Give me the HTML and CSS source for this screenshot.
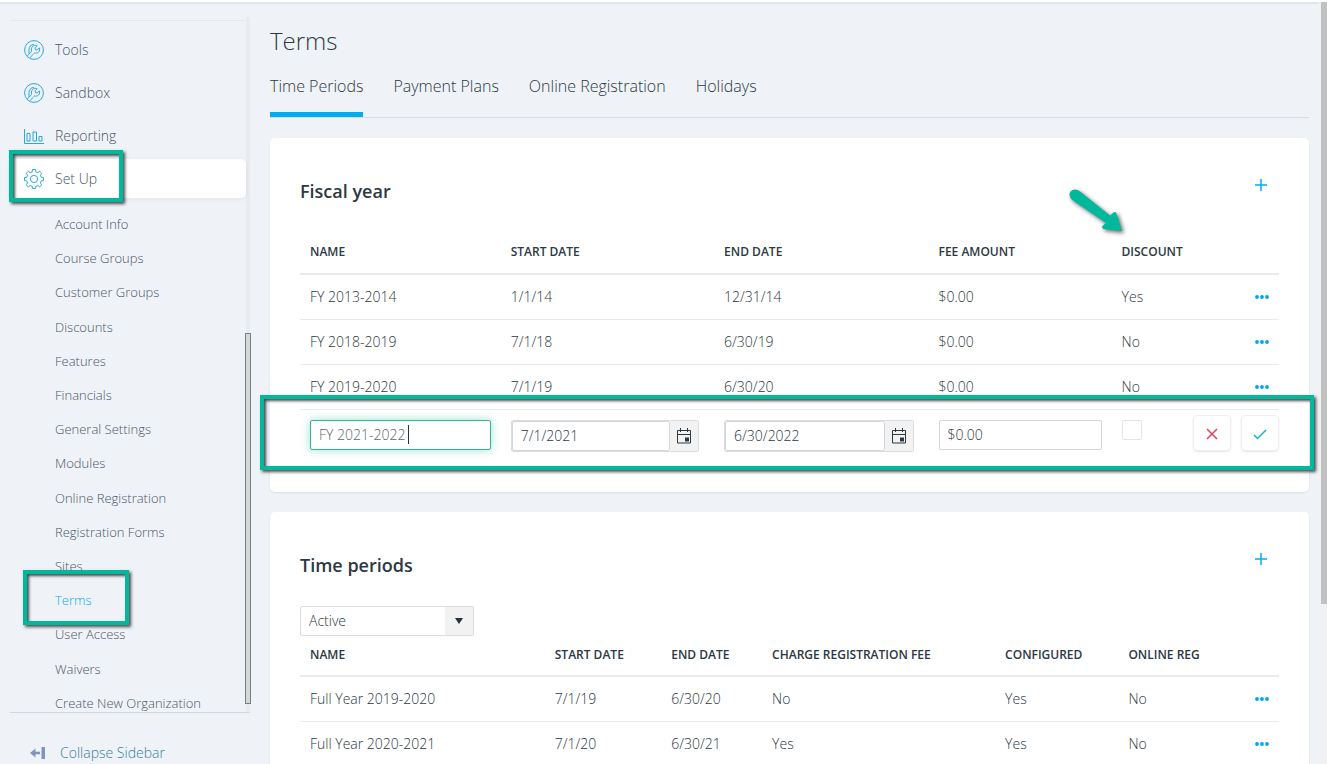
FILE: index.html
```html
<!DOCTYPE html>
<html lang="en">
<head>
    <meta charset="UTF-8">
    <meta name="viewport" content="width=device-width, initial-scale=1.0">
    <title>Terms</title>
    <link rel="stylesheet" href="styles.css">
</head>
<body>

    <!-- Shared icons -->
    <svg class="sprite" aria-hidden="true">
        <symbol id="icon-wrench" viewBox="0 0 20 20">
            <circle cx="10" cy="10" r="9.4"/>
            <path d="M3.400 16.400C3.800 15 5 13.800 6.500 12.700C7.500 12 7.700 11.500 7.500 10.300C7.200 8.300 8 6.600 9.500 5.800C10.800 5.200 12 5.200 13.200 5.700L11 7.900l.4 1.700 1.800.4 2.200-2.200c.6 1.500.2 3.200-.9 4.300-1.100 1-2.600 1.300-4 .9-1.200 1-2.800 2.600-4.300 4.600"/>
            <path d="M5 14.200V9.500C5 6.500 7 4.500 10 4.500"/>
        </symbol>
        <symbol id="icon-calendar" viewBox="0 0 16 16">
            <path d="M1.500 2.500h13v12.500h-13zM1.500 6.500h13M4.500 0v4M11.500 0v4"/>
            <path class="fill" d="M9 9.500h4v4H9z"/>
        </symbol>
        <symbol id="icon-dots" viewBox="0 0 14 4">
            <circle cx="2" cy="2" r="1.900"/>
            <circle cx="7" cy="2" r="1.900"/>
            <circle cx="12" cy="2" r="1.900"/>
        </symbol>
        <symbol id="icon-plus" viewBox="0 0 12 12">
            <path d="M6 0v12M0 6h12"/>
        </symbol>
    </svg>

    <div class="page">
        <aside class="sidebar">
            <div class="side-scroll">
                <nav class="side-nav">
                    <ul class="menu">
                        <li><a href="#"><svg class="menu-icon"><use href="#icon-wrench"/></svg>Tools</a></li>
                        <li><a href="#"><svg class="menu-icon"><use href="#icon-wrench"/></svg>Sandbox</a></li>
                        <li><a href="#"><svg class="menu-icon" viewBox="0 0 20 20"><path d="M.5 3v14.500H20M3 7.500h3v7.500h-3zM9 6h3.500v9h-3.500zM15 10.500h3v4.500h-3z"/></svg>Reporting</a></li>
                        <li class="current">
                            <a href="#"><svg class="menu-icon" viewBox="0 0 20 20"><circle cx="10" cy="10" r="3.600"/><path d="M8.200 2.800 8.500.5h3l.3 2.300 2 .9 1.900-1.400 2.100 2.100-1.400 1.900.9 2 2.200.3v3l-2.200.3-.9 2 1.400 1.900-2.100 2.100-1.900-1.400-2 .9-.3 2.100h-3l-.3-2.100-2-.9-1.900 1.400-2.100-2.100 1.400-1.900-.9-2-2.200-.3v-3l2.200-.3.9-2-1.400-1.900 2.100-2.100 1.900 1.400z"/></svg>Set Up</a>
                            <span class="mark mark-setup"></span>
                        </li>
                    </ul>
                    <ul class="submenu">
                        <li><a href="#">Account Info</a></li>
                        <li><a href="#">Course Groups</a></li>
                        <li><a href="#">Customer Groups</a></li>
                        <li><a href="#">Discounts</a></li>
                        <li><a href="#">Features</a></li>
                        <li><a href="#">Financials</a></li>
                        <li><a href="#">General Settings</a></li>
                        <li><a href="#">Modules</a></li>
                        <li><a href="#">Online Registration</a></li>
                        <li><a href="#">Registration Forms</a></li>
                        <li><a href="#">Sites</a></li>
                        <li><a href="#" class="selected">Terms</a><span class="mark mark-terms"></span></li>
                        <li><a href="#">User Access</a></li>
                        <li><a href="#">Waivers</a></li>
                        <li><a href="#">Create New Organization</a></li>
                    </ul>
                </nav>
                <div class="side-track"><div class="side-thumb"></div></div>
            </div>
            <button class="collapse" type="button">
                <svg viewBox="0 0 16 14"><path d="M0 7l5.500-4.500v3.200H10v2.600H5.500v3.200zM11.500 1H15v12h-3.500z"/></svg>
                Collapse Sidebar
            </button>
        </aside>

        <main class="content">
            <h1>Terms</h1>
            <nav class="tabs">
                <a href="#" class="active">Time Periods</a>
                <a href="#">Payment Plans</a>
                <a href="#">Online Registration</a>
                <a href="#">Holidays</a>
            </nav>

            <!-- Fiscal year -->
            <section class="card">
                <div class="card-head">
                    <h2>Fiscal year</h2>
                    <button class="add" type="button" aria-label="Add fiscal year"><svg><use href="#icon-plus"/></svg></button>
                </div>
                <table class="fiscal">
                    <thead>
                        <tr>
                            <th>Name</th>
                            <th>Start date</th>
                            <th>End date</th>
                            <th>Fee amount</th>
                            <th class="discount">Discount
                                <svg class="arrow" viewBox="0 0 60 52"><path d="M3.500 3.500C6 .8 10 .8 13 3.500L43 27.500 46.500 24.500C47.500 23.500 49 24 49.500 25.500L55 43 36.500 41C35 40.500 34.500 38.500 36 37.500L39 35 6 12.500C2.500 10 1.500 6 3.500 3.500z"/></svg>
                            </th>
                            <th></th>
                        </tr>
                    </thead>
                    <tbody>
                        <tr>
                            <td>FY 2013-2014</td><td>1/1/14</td><td>12/31/14</td><td>$0.00</td><td>Yes</td>
                            <td class="more"><button type="button" aria-label="More"><svg><use href="#icon-dots"/></svg></button></td>
                        </tr>
                        <tr>
                            <td>FY 2018-2019</td><td>7/1/18</td><td>6/30/19</td><td>$0.00</td><td>No</td>
                            <td class="more"><button type="button" aria-label="More"><svg><use href="#icon-dots"/></svg></button></td>
                        </tr>
                        <tr>
                            <td>FY 2019-2020</td><td>7/1/19</td><td>6/30/20</td><td>$0.00</td><td>No</td>
                            <td class="more"><button type="button" aria-label="More"><svg><use href="#icon-dots"/></svg></button></td>
                        </tr>
                        <tr class="edit">
                            <td><div class="name-field"><input type="text" aria-label="Name" value="FY 2021-2022"><span class="caret"></span></div></td>
                            <td><div class="date"><input type="text" aria-label="Start date" value="7/1/2021"><button type="button" aria-label="Pick start date"><svg><use href="#icon-calendar"/></svg></button></div></td>
                            <td><div class="date"><input type="text" aria-label="End date" value="6/30/2022"><button type="button" aria-label="Pick end date"><svg><use href="#icon-calendar"/></svg></button></div></td>
                            <td><input type="text" aria-label="Fee amount" value="$0.00"></td>
                            <td><input type="checkbox" aria-label="Discount"></td>
                            <td>
                                <div class="actions">
                                    <button class="cancel" type="button" aria-label="Cancel"><svg viewBox="0 0 14 14"><path d="M2 2l10 10M12 2 2 12"/></svg></button>
                                    <button class="save" type="button" aria-label="Save"><svg viewBox="0 0 14 14"><path d="M1 8l3.500 3.500L13 3"/></svg></button>
                                </div>
                            </td>
                        </tr>
                    </tbody>
                </table>
                <span class="mark mark-row"></span>
            </section>

            <!-- Time periods -->
            <section class="card">
                <div class="card-head">
                    <h2>Time periods</h2>
                    <button class="add" type="button" aria-label="Add time period"><svg><use href="#icon-plus"/></svg></button>
                </div>
                <div class="filter">
                    <select aria-label="Status">
                        <option>Active</option>
                        <option>Inactive</option>
                    </select>
                    <svg viewBox="0 0 8 6"><path d="M0 0h8L4 6z"/></svg>
                </div>
                <table class="periods">
                    <thead>
                        <tr>
                            <th>Name</th>
                            <th>Start date</th>
                            <th>End date</th>
                            <th>Charge registration fee</th>
                            <th>Configured</th>
                            <th>Online reg</th>
                            <th></th>
                        </tr>
                    </thead>
                    <tbody>
                        <tr>
                            <td>Full Year 2019-2020</td><td>7/1/19</td><td>6/30/20</td><td>No</td><td>Yes</td><td>No</td>
                            <td class="more"><button type="button" aria-label="More"><svg><use href="#icon-dots"/></svg></button></td>
                        </tr>
                        <tr>
                            <td>Full Year 2020-2021</td><td>7/1/20</td><td>6/30/21</td><td>Yes</td><td>Yes</td><td>No</td>
                            <td class="more"><button type="button" aria-label="More"><svg><use href="#icon-dots"/></svg></button></td>
                        </tr>
                    </tbody>
                </table>
            </section>
        </main>

        <div class="page-track"><div class="page-thumb"></div></div>
    </div>

</body>
</html>
```
FILE: styles.css
```css
* {
    box-sizing: border-box;
}
body {
    margin: 0;
    font-family: "Open Sans", "Noto Sans", sans-serif;
    font-weight: 350;
    font-size: 14px;
    line-height: 20px;
    color: #2c3842;
    background-color: #eff3f8;
}
a {
    color: inherit;
    text-decoration: none;
}
ul {
    list-style: none;
    margin: 0;
    padding: 0;
}
button, input, select {
    font: inherit;
    color: inherit;
}
button {
    padding: 0;
    border: none;
    background: none;
    cursor: pointer;
}
svg {
    display: block;
    fill: none;
    stroke: currentColor;
}
.sprite {
    display: none;
}
.page {
    display: flex;
    height: 100vh;
    overflow: hidden;
    border-top: 2px solid #fff;
    box-shadow: inset 0 2px 1px #e2e6ec;
}

/* Sidebar */
.sidebar {
    display: flex;
    flex-direction: column;
    flex: none;
    width: 250px;
    padding: 15px 0 0 10px;
    color: #4a5365;
}
.side-scroll {
    display: flex;
    flex: 1;
    border-bottom: 1px solid #d3d8de;
}
.side-nav {
    display: flex;
    flex-direction: column;
    flex: 1;
    margin-top: 3px;
    padding-top: 9px;
    border-top: 1px solid #e2e8ec;
}
.menu {
    display: flex;
    flex-direction: column;
    gap: 4px;
    margin-bottom: 18px;
}
.menu li, .submenu li {
    position: relative;
}
.menu a {
    display: flex;
    align-items: center;
    gap: 11px;
    height: 39px;
    padding-left: 14px;
    border-radius: 5px;
}
.menu-icon {
    width: 20px;
    height: 20px;
    color: #2ba6de;
}
.menu .current a {
    background-color: #fff;
    box-shadow: 0 1px 5px rgba(0, 0, 0, 0.06);
}
.submenu {
    display: flex;
    flex-direction: column;
    flex: 1;
    justify-content: space-between;
    padding-left: 45px;
    font-size: 13px;
    line-height: 17px;
}
.submenu a {
    display: block;
}
.submenu .selected {
    color: #00adf2;
}
.side-track {
    width: 4px;
    display: flex;
    justify-content: center;
    align-items: flex-end;
    padding-bottom: 8px;
    background-color: #e8ecf1;
}
.side-thumb {
    flex: none;
    width: 6px;
    height: 54%;
    background-color: #d6d8d6;
    border: 1px solid #72818d;
}
.collapse {
    display: flex;
    align-items: center;
    gap: 14px;
    height: 51px;
    padding: 28px 0 0 20px;
    color: #37809b;
    line-height: 24px;
}
.collapse svg {
    width: 16px;
    height: 14px;
    fill: #8094bd;
    stroke: none;
}

/* Content */
.content {
    flex: 1;
    padding: 23px 10px 0 20px;
}
h1 {
    margin: 0 0 17px;
    font-size: 24px;
    font-weight: 300;
    line-height: 32px;
}
.tabs {
    display: flex;
    gap: 30px;
    margin-bottom: 20px;
    border-bottom: 1px solid #d8dce2;
    font-size: 16px;
    line-height: 24px;
}
.tabs a {
    padding-bottom: 14px;
    border-bottom: 5px solid transparent;
}
.tabs .active {
    border-color: #00aeef;
}
.card {
    position: relative;
    margin-bottom: 20px;
    padding: 30px;
    background-color: #fff;
    border-radius: 5px;
    box-shadow: 0 1px 2px rgba(0, 0, 0, 0.08);
}
.card-head {
    display: flex;
    justify-content: space-between;
    align-items: flex-start;
    height: 64px;
}
h2 {
    margin: 11px 0 0;
    font-size: 18px;
    font-weight: 600;
    line-height: 24px;
}
.add {
    padding: 11px;
    margin-right: 1px;
    color: #00adf2;
}
.add svg {
    width: 12px;
    height: 12px;
    stroke-width: 1.5;
}

/* Tables */
table {
    width: 100%;
    table-layout: fixed;
    border-collapse: separate;
    border-spacing: 0;
}
th {
    padding: 10px 10px 11px;
    border-bottom: 2px solid #e8ecf1;
    font-size: 12px;
    font-weight: 600;
    text-align: left;
    text-transform: uppercase;
    white-space: nowrap;
}
td {
    padding: 12px 10px;
    border-bottom: 1px solid #e8ebee;
}
.fiscal th:nth-child(1) { width: 20.5%; }
.fiscal th:nth-child(2) { width: 21.8%; }
.fiscal th:nth-child(3) { width: 21.9%; }
.fiscal th:nth-child(4) { width: 18.7%; }
.fiscal th:nth-child(5) { width: 7.3%; }
.periods th { padding: 9px 10px 10px; }
.periods th:nth-child(1) { width: 25%; }
.periods th:nth-child(2) { width: 11.9%; }
.periods th:nth-child(3) { width: 10.3%; }
.periods th:nth-child(4) { width: 23.8%; }
.periods th:nth-child(5) { width: 12.6%; }
.more button {
    display: block;
    margin-left: auto;
    padding: 8px 0;
    color: #00a4f2;
}
.more svg {
    width: 14px;
    height: 4px;
    fill: currentColor;
    stroke: none;
}
.discount {
    position: relative;
}

/* Row being edited */
.edit td {
    padding: 10px;
    border-bottom: none;
    vertical-align: top;
}
.edit td:last-child {
    padding: 5px 0;
}
input[type="text"] {
    display: block;
    width: 100%;
    height: 30px;
    padding: 0 8px 1px;
    border: 1px solid #d5d6dc;
    border-radius: 2px;
    background-color: #fff;
}
.name-field {
    position: relative;
}
.name-field input {
    color: #5d666c;
    border-color: #2db993;
    box-shadow: 0 0 10px rgba(0, 185, 140, 0.4);
}
.caret {
    position: absolute;
    top: 5px;
    left: 98px;
    width: 1px;
    height: 19px;
    background-color: #26323d;
}
.date {
    display: flex;
    border: 1px solid #dcdde2;
    border-radius: 2px;
}
.date input {
    flex: 1;
    min-width: 0;
}
.edit td:nth-child(2), .edit td:nth-child(3) {
    padding-right: 15px;
}
.date button {
    display: flex;
    align-items: center;
    justify-content: center;
    width: 28px;
    background-color: #f2f2f2;
}
.date svg {
    width: 16px;
    height: 16px;
}
.fill {
    fill: currentColor;
    stroke: none;
}
input[type="checkbox"] {
    appearance: none;
    display: block;
    width: 20px;
    height: 20px;
    margin: 0;
    border: 1px solid #e3e5e8;
    border-radius: 2px;
    background-color: #fff;
}
.actions {
    display: flex;
    justify-content: flex-end;
    gap: 10px;
}
.actions button {
    display: flex;
    align-items: center;
    justify-content: center;
    width: 38px;
    height: 36px;
    padding-top: 2px;
    border: 1px solid #eceef0;
    border-radius: 5px;
    box-shadow: 0 1px 2px rgba(0, 0, 0, 0.1);
}
.actions svg {
    width: 14px;
    height: 14px;
    stroke-width: 1.5;
}
.cancel {
    color: #e0415c;
}
.save {
    color: #12b5c4;
}

/* Status filter */
.filter {
    position: relative;
    width: 174px;
}
.filter select {
    appearance: none;
    display: block;
    width: 100%;
    height: 30px;
    padding: 0 8px;
    border: 1px solid #dcdde0;
    border-radius: 2px;
    background: linear-gradient(#f2f2f2, #f2f2f2) right / 28px 100% no-repeat #fff;
}
.filter svg {
    position: absolute;
    top: 12px;
    right: 11px;
    width: 8px;
    height: 6px;
    fill: #26323d;
    stroke: none;
    pointer-events: none;
}

/* Highlights */
.mark {
    position: absolute;
    z-index: 2;
    border: 4px solid #00b89c;
    box-shadow: 2px 2px 3px rgba(0, 0, 0, 0.7), inset 2px 2px 3px rgba(0, 0, 0, 0.7);
    pointer-events: none;
}
.mark-setup {
    top: -9px;
    left: -1px;
    width: 114px;
    height: 52px;
}
.mark-terms {
    top: -22px;
    left: -32px;
    width: 106px;
    height: 55px;
}
.mark-row {
    right: -5px;
    bottom: 22px;
    left: -10px;
    height: 75px;
}
.arrow {
    position: absolute;
    top: -44px;
    left: -45px;
    width: 60px;
    height: 52px;
    fill: #00b89c;
    stroke: none;
    filter: drop-shadow(2px 2px 2px rgba(0, 0, 0, 0.6));
}

/* Window scrollbar */
.page-track {
    flex: none;
    width: 8px;
    padding-left: 2px;
    background-color: #f1f1f1;
}
.page-thumb {
    height: 79%;
    background-color: #c1c1c1;
}
```
